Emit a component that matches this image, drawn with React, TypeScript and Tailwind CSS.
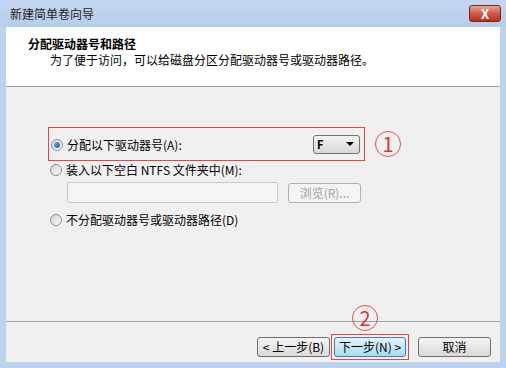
import React from 'react';

const font = { fontFamily: '"Noto Sans CJK SC", "Liberation Sans", sans-serif' };

const Radio = ({ checked }: { checked?: boolean }) => (
  <span className="flex h-[12px] w-[12px] shrink-0 items-center justify-center rounded-full border border-[#8e8f8f] bg-gradient-to-br from-[#d4d4d4] to-[#fafafa]">
    {checked && <span className="h-[6px] w-[6px] rounded-full bg-gradient-to-br from-[#6ab5e8] to-[#1d5a8a]" />}
  </span>
);

const WinButton = ({ label, focused, disabled }: { label: string; focused?: boolean; disabled?: boolean }) => (
  <button
    className={
      focused
        ? 'flex h-[20px] w-[72px] items-center justify-center rounded-[3px] border border-[#3c7fb1] bg-gradient-to-b from-[#e5f4fc] to-[#a9daf5] text-[12px] text-black'
        : disabled
        ? 'flex h-[20px] w-[73px] items-center justify-center rounded-[3px] border border-[#adb2b5] bg-[#f4f4f4] text-[12px] text-[#a0a0a0]'
        : 'flex h-[20px] w-[73px] items-center justify-center rounded-[3px] border border-[#707070] bg-gradient-to-b from-[#f4f4f4] to-[#d9d9d9] text-[12px] text-black'
    }
  >
    {label}
  </button>
);

const Circled = ({ n }: { n: string }) => (
  <div className="flex h-[26px] w-[26px] items-center justify-center rounded-full border border-[#e05050] text-[20px] leading-none text-[#e03030]">
    {n}
  </div>
);

export default function App() {
  return (
    <div style={font} className="flex h-[368px] w-[506px] flex-col bg-[#bcd3ec] text-[12px] text-black">
      {/* title bar */}
      <div className="flex h-[27px] items-center justify-between bg-gradient-to-b from-[#c2d7ef] to-[#b6cde8] pl-[10px] pr-[5px]">
        <span className="text-[12px] text-[#1e1e1e]">新建简单卷向导</span>
        <div className="flex h-[17px] w-[32px] items-center justify-center rounded-[3px] border border-[#6b2a22] bg-gradient-to-b from-[#e8a393] via-[#cf5a45] to-[#b8311c] text-[13px] font-bold leading-none text-white">
          X
        </div>
      </div>

      <div className="mx-[6px] flex flex-1 flex-col">
        {/* header */}
        <div className="h-[60px] border-b border-[#a0a0a0] bg-white pl-[22px] pt-[9px]">
          <div className="text-[12px] font-bold leading-[16px]">分配驱动器号和路径</div>
          <div className="pl-[22px] text-[12px] leading-[16px]">为了便于访问，可以给磁盘分区分配驱动器号或驱动器路径。</div>
        </div>

        {/* body */}
        <div className="flex flex-1 flex-col bg-[#f0f0f0]">
          <div className="flex-1 pl-[42px] pt-[40px]">
            <div className="flex items-center gap-[10px]">
              <div className="flex h-[34px] w-[317px] items-center justify-between border border-[#e04848] pl-[2px] pr-[4px]">
                <div className="flex items-center gap-[4px] pt-[2px]">
                  <Radio checked />
                  <span>分配以下驱动器号(A):</span>
                </div>
                <div className="flex h-[19px] w-[47px] items-center justify-between rounded-[3px] border border-[#707070] bg-gradient-to-b from-[#f2f2f2] to-[#d8d8d8] pl-[3px] pr-[5px]">
                  <span className="text-[11px] font-bold leading-none">F</span>
                  <span className="h-0 w-0 border-x-[4px] border-t-[4px] border-x-transparent border-t-black" />
                </div>
              </div>
              <Circled n="1" />
            </div>

            <div className="flex items-center gap-[4px] pl-[2px]">
              <Radio />
              <span>装入以下空白 NTFS 文件夹中(M):</span>
            </div>

            <div className="mt-[3px] flex items-center gap-[10px] pl-[19px]">
              <div className="h-[21px] w-[211px] rounded-[2px] border border-[#c9c9c9] bg-[#f4f4f4]" />
              <WinButton label="浏览(R)..." disabled />
            </div>

            <div className="mt-[8px] flex items-center gap-[4px] pl-[2px]">
              <Radio />
              <span>不分配驱动器号或驱动器路径(D)</span>
            </div>
          </div>

          {/* footer */}
          <div className="h-[41px] border-t border-[#a0a0a0] pt-[12px]">
            <div className="flex items-center justify-end pr-[9px]">
              <WinButton label="< 上一步(B)" />
              <div className="relative ml-[1px] flex h-[26px] w-[78px] items-center justify-center border border-[#e04848]">
                <div className="absolute left-[20px] top-[-30px]">
                  <Circled n="2" />
                </div>
                <WinButton label="下一步(N) >" focused />
              </div>
              <div className="ml-[9px]">
                <WinButton label="取消" />
              </div>
            </div>
          </div>
        </div>
      </div>
      <div className="h-[6px]" />
    </div>
  );
}
